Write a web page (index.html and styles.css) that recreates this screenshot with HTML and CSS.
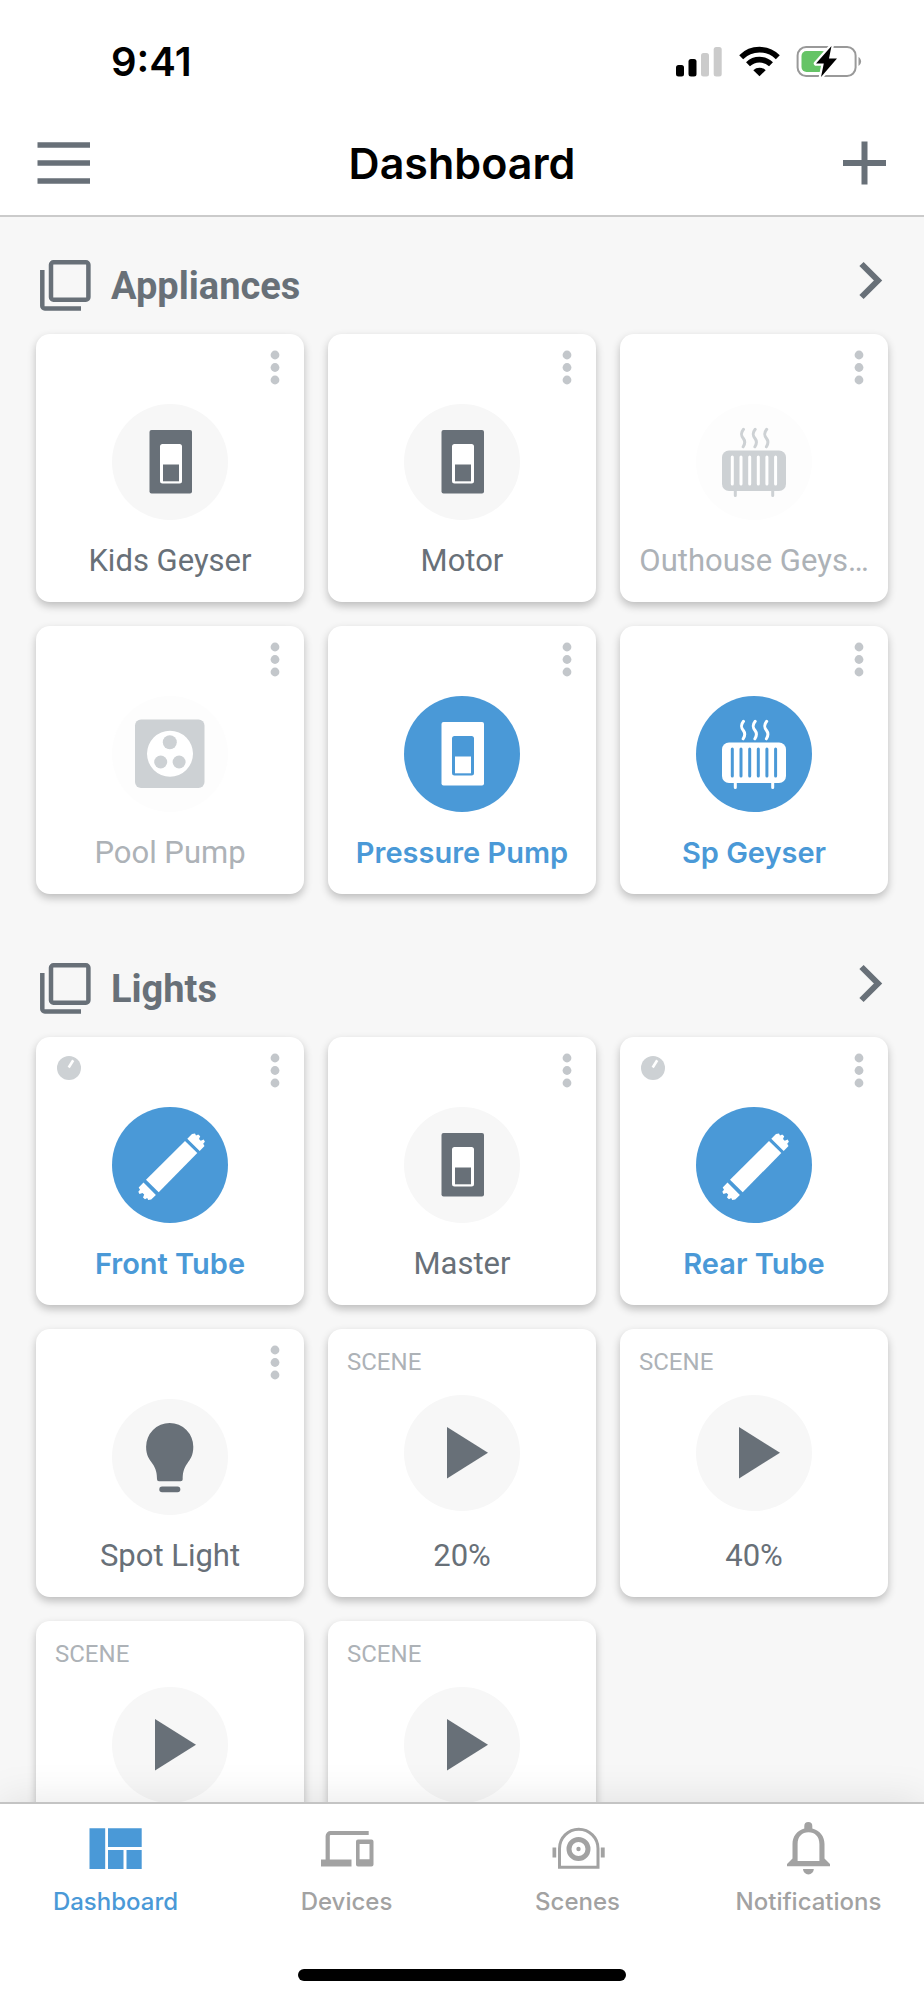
FILE: index.html
```html
<!DOCTYPE html>
<html lang="en">
<head>
<meta charset="utf-8">
<meta name="viewport" content="width=device-width, initial-scale=1">
<title>Dashboard</title>
<link rel="stylesheet" href="styles.css">
</head>
<body>
<svg class="sprite" aria-hidden="true">
  <symbol id="dots" viewBox="0 0 20 36">
    <circle cx="10" cy="5" r="4.4"/><circle cx="10" cy="17.5" r="4.4"/><circle cx="10" cy="30" r="4.4"/>
  </symbol>
  <symbol id="layers" viewBox="0 0 52 52">
    <path d="M13.5 2.3h32.4a2.5 2.5 0 0 1 2.5 2.5v32.400a2.500 2.500 0 0 1-2.500 2.500H13.500a2.500 2.500 0 0 1-2.500-2.500V4.800a2.500 2.500 0 0 1 2.500-2.500zM2.300 10v35.900a2.500 2.500 0 0 0 2.500 2.500H41" fill="none" stroke="currentColor" stroke-width="4.500"/>
  </symbol>
  <symbol id="chevron" viewBox="0 0 26 42">
    <path d="M3.500 4l16.500 16.500L3.500 37" fill="none" stroke="currentColor" stroke-width="6"/>
  </symbol>
  <symbol id="dial" viewBox="0 0 24 24">
    <circle cx="12" cy="12" r="12"/><path d="M11.700 11.500l4.500-7.200" stroke="#fff" stroke-width="2.600"/>
  </symbol>
  <symbol id="switch" viewBox="0 0 116 116">
    <rect x="37.500" y="26" width="42.500" height="63.500" rx="2"/>
    <rect class="hole" x="48" y="40" width="22" height="39.500" rx="2.500"/>
    <rect x="51" y="60.500" width="16" height="16.800"/>
  </symbol>
  <symbol id="radiator" viewBox="0 0 116 116">
    <rect x="26" y="46.500" width="64" height="40.500" rx="7"/>
    <path class="slit" d="M36.300 53v27M45 53v27M53.700 53v27M62.300 53v27M70.900 53v27M79.600 53v27" fill="none" stroke-width="3" stroke-linecap="round"/>
    <path d="M39.300 86v5.500M76.700 86v5.500M47.500 25.300c-3.600 4.500-2 7 0 9.500s1.500 5-.3 8M59.200 25.300c-3.600 4.500-2 7 0 9.500s1.500 5-.3 8M70.700 25.300c-3.600 4.500-2 7 0 9.500s1.500 5-.3 8" fill="none" stroke="currentColor" stroke-width="3" stroke-linecap="round"/>
  </symbol>
  <symbol id="socket" viewBox="0 0 116 116">
    <rect x="23" y="23.500" width="69.500" height="68.500" rx="6"/>
    <circle class="hole" cx="58" cy="57.700" r="23"/>
    <circle cx="57.800" cy="46.300" r="7"/><circle cx="48.700" cy="66" r="6.500"/><circle cx="67.100" cy="66" r="6.500"/>
  </symbol>
  <symbol id="tube" viewBox="0 0 116 116">
    <path d="M73 34l12.300 12L46.700 85.300 34 72.700z"/>
    <path id="cap" d="M75.300 31.700L80 27l3-.4 1 2 2.200-1.200 2 1.800-1.200 2.800 1.700 1.700 3-1.200 1.200 2.300-1.700 2 1.300 2.200-4.800 5z"/>
    <use href="#cap" transform="rotate(180 59.600 59.800)"/>
  </symbol>
  <symbol id="bulb" viewBox="0 0 116 116">
    <path d="M57.700 24a23.600 23.600 0 0 1 23.600 23.700c0 9-3.200 12.500-6.200 17-3.500 5-4.400 9.500-4.400 15.600q0 2-2 2H47q-2 0-2-2c0-6.100-1-10.600-4.500-15.600-3-4.500-6.400-8-6.400-17A23.600 23.600 0 0 1 57.700 24z"/>
    <rect x="47.300" y="87.600" width="21" height="5.700" rx="2.800"/>
  </symbol>
  <symbol id="play" viewBox="0 0 116 116"><path d="M43 32v51.500L84 57.800z"/></symbol>
</svg>

<header class="top">
  <div class="status">
    <time class="clock">9:41</time>
    <svg class="status-icons" viewBox="0 0 186 32" role="img" aria-label="Signal, Wi-Fi and battery">
      <rect x="0" y="19" width="8" height="11.500" rx="2.500"/><rect x="12.500" y="13" width="8" height="17.500" rx="2.500"/>
      <g fill="#cbcbcb"><rect x="25" y="7" width="8" height="23.500" rx="2.500"/><rect x="37.700" y="1" width="8" height="29.500" rx="2.500"/></g>
      <g fill="none" stroke="#000" stroke-width="5.600"><path d="M65.200 11.200a26 26 0 0 1 36.600 0"/><path d="M72 18.300a16.500 16.500 0 0 1 23 0"/></g>
      <path d="M77.300 24.200a9 9 0 0 1 12.400 0L83.500 30.300z"/>
      <rect x="121.600" y="1" width="58" height="29" rx="8.500" fill="none" stroke="#999" stroke-width="2"/>
      <path d="M182.500 11a5.200 5.200 0 0 1 0 9z" fill="#999"/>
      <rect x="125.500" y="5" width="25" height="21" rx="5" fill="#65c466"/>
      <path d="M155.500 0L140 17.500h7.800L145 31l16-18.500h-8z" fill="#000" stroke="#fff" stroke-width="4.500" paint-order="stroke" stroke-linejoin="round"/>
    </svg>
  </div>
  <div class="nav">
    <button class="icon-btn" type="button" aria-label="Menu">
      <svg width="54" height="44" viewBox="0 0 54 44"><path d="M.500 4h52.500M.500 22h52.500M.500 40h52.500" stroke="currentColor" stroke-width="5.600"/></svg>
    </button>
    <h1>Dashboard</h1>
    <button class="icon-btn" type="button" aria-label="Add">
      <svg width="44" height="44" viewBox="0 0 44 44"><path d="M0 22h43M21.500 .500v43" stroke="currentColor" stroke-width="6"/></svg>
    </button>
  </div>
</header>

<main>
  <section>
    <div class="section-head">
      <svg class="layers"><use href="#layers"/></svg>
      <h2>Appliances</h2>
      <a class="more" href="#appliances" aria-label="Open Appliances"><svg><use href="#chevron"/></svg></a>
    </div>
    <div class="grid">
      <article class="card">
        <div class="card-top"><button class="menu" type="button" aria-label="Options"><svg><use href="#dots"/></svg></button></div>
        <svg class="disc"><use href="#switch"/></svg>
        <p class="name">Kids Geyser</p>
      </article>
      <article class="card">
        <div class="card-top"><button class="menu" type="button" aria-label="Options"><svg><use href="#dots"/></svg></button></div>
        <svg class="disc"><use href="#switch"/></svg>
        <p class="name">Motor</p>
      </article>
      <article class="card offline">
        <div class="card-top"><button class="menu" type="button" aria-label="Options"><svg><use href="#dots"/></svg></button></div>
        <svg class="disc"><use href="#radiator"/></svg>
        <p class="name">Outhouse Geys…</p>
      </article>
      <article class="card offline">
        <div class="card-top"><button class="menu" type="button" aria-label="Options"><svg><use href="#dots"/></svg></button></div>
        <svg class="disc"><use href="#socket"/></svg>
        <p class="name">Pool Pump</p>
      </article>
      <article class="card on">
        <div class="card-top"><button class="menu" type="button" aria-label="Options"><svg><use href="#dots"/></svg></button></div>
        <svg class="disc"><use href="#switch"/></svg>
        <p class="name">Pressure Pump</p>
      </article>
      <article class="card on">
        <div class="card-top"><button class="menu" type="button" aria-label="Options"><svg><use href="#dots"/></svg></button></div>
        <svg class="disc"><use href="#radiator"/></svg>
        <p class="name">Sp Geyser</p>
      </article>
    </div>
  </section>

  <section>
    <div class="section-head">
      <svg class="layers"><use href="#layers"/></svg>
      <h2>Lights</h2>
      <a class="more" href="#lights" aria-label="Open Lights"><svg><use href="#chevron"/></svg></a>
    </div>
    <div class="grid">
      <article class="card on">
        <div class="card-top"><svg class="dial"><use href="#dial"/></svg><button class="menu" type="button" aria-label="Options"><svg><use href="#dots"/></svg></button></div>
        <svg class="disc"><use href="#tube"/></svg>
        <p class="name">Front Tube</p>
      </article>
      <article class="card">
        <div class="card-top"><button class="menu" type="button" aria-label="Options"><svg><use href="#dots"/></svg></button></div>
        <svg class="disc"><use href="#switch"/></svg>
        <p class="name">Master</p>
      </article>
      <article class="card on">
        <div class="card-top"><svg class="dial"><use href="#dial"/></svg><button class="menu" type="button" aria-label="Options"><svg><use href="#dots"/></svg></button></div>
        <svg class="disc"><use href="#tube"/></svg>
        <p class="name">Rear Tube</p>
      </article>
      <article class="card">
        <div class="card-top"><button class="menu" type="button" aria-label="Options"><svg><use href="#dots"/></svg></button></div>
        <svg class="disc"><use href="#bulb"/></svg>
        <p class="name">Spot Light</p>
      </article>
      <article class="card scene">
        <div class="card-top"><span class="tag">SCENE</span></div>
        <svg class="disc"><use href="#play"/></svg>
        <p class="name">20%</p>
      </article>
      <article class="card scene">
        <div class="card-top"><span class="tag">SCENE</span></div>
        <svg class="disc"><use href="#play"/></svg>
        <p class="name">40%</p>
      </article>
      <article class="card scene">
        <div class="card-top"><span class="tag">SCENE</span></div>
        <svg class="disc"><use href="#play"/></svg>
      </article>
      <article class="card scene">
        <div class="card-top"><span class="tag">SCENE</span></div>
        <svg class="disc"><use href="#play"/></svg>
      </article>
    </div>
  </section>
</main>

<footer class="bottom">
  <nav class="tabs">
    <a class="tab active" href="#dashboard" aria-current="page">
      <svg viewBox="0 0 60 60"><path d="M3.500 10.300h15.700V51H3.500zM22 10.300h33.700V29H22zM22 32h15.500v19H22zM40.500 32h15.200v19H40.500z"/></svg>
      Dashboard
    </a>
    <a class="tab" href="#devices">
      <svg viewBox="0 0 60 60"><path d="M10.700 42V18a3 3 0 0 1 3-3h38" fill="none" stroke="currentColor" stroke-width="4.200"/><path d="M4 41.500h30.500v7H4z"/><path fill-rule="evenodd" d="M41 21.500h13.500a2 2 0 0 1 2 2v23a2 2 0 0 1-2 2H41a2 2 0 0 1-2-2v-23a2 2 0 0 1 2-2zM42.600 26v15.300h9.900V26z"/></svg>
      Devices
    </a>
    <a class="tab" href="#scenes">
      <svg viewBox="0 0 60 60"><path d="M11.500 49.200V30.500a19.200 19.200 0 0 1 38.500 0v18.700z" fill="none" stroke="currentColor" stroke-width="3"/><circle cx="30.500" cy="31" r="9.500" fill="none" stroke="currentColor" stroke-width="5"/><circle cx="30.500" cy="31" r="2.200"/><path d="M4.500 29.500h3.700v10H4.500zM52.800 29.500h3.900v10h-3.900z"/></svg>
      Scenes
    </a>
    <a class="tab" href="#notifications">
      <svg viewBox="0 0 60 60"><path fill-rule="evenodd" d="M25.300 10.500V8a4 4 0 0 1 8 0v2.500C41 12.500 45.500 18.500 45.500 26v14.500l5.500 5.500v2.200H8V46l5.500-5.500V26c0-7.500 4.500-13.500 11.800-15.500zM18.600 43h21.800V26c0-7.200-4.300-11.700-10.900-11.700S18.600 18.800 18.600 26z"/><path d="M24 51h10.800a5.400 5.400 0 0 1-10.800 0z"/></svg>
      Notifications
    </a>
  </nav>
  <div class="home-bar"></div>
</footer>
</body>
</html>
```

FILE: styles.css
```css
:root {
  --ink: #687078;
  --blue: #4a99d7;
  --page: #f7f7f7;
}

* {
  box-sizing: border-box;
}

body {
  margin: 0;
  height: 100vh;
  display: flex;
  flex-direction: column;
  background: #fff;
  color: var(--ink);
  font-family: Roboto, "Open Sans", sans-serif;
}

h1,
h2,
p {
  margin: 0;
}

svg {
  display: block;
  fill: currentColor;
  flex: none;
}

button {
  padding: 0;
  border: 0;
  background: none;
  color: inherit;
}

.sprite {
  position: absolute;
  width: 0;
  height: 0;
}

/* Status bar and title */
.top {
  border-bottom: 2px solid #cbcbcb;
}

.status {
  display: flex;
  align-items: center;
  justify-content: space-between;
  padding: 37px 62px 0 111px;
}

.clock {
  color: #000;
  font: 600 40px/50px Inter, sans-serif;
}

.status-icons {
  width: 186px;
  height: 32px;
  color: #000;
}

.nav {
  display: grid;
  grid-template-columns: 1fr auto 1fr;
  align-items: center;
  padding: 48px 37px 24px;
}

.icon-btn:last-child {
  justify-self: end;
}

h1 {
  color: #000;
  font: 600 43px/56px Inter, sans-serif;
}

/* Scrolling content */
main {
  flex: 1;
  min-height: 0;
  overflow: hidden;
  padding: 43px 36px 0;
  background: var(--page);
}

section + section {
  margin-top: 69px;
}

.section-head {
  display: flex;
  align-items: center;
  gap: 19px;
  padding: 0 4px;
  margin-bottom: 22px;
}

.layers {
  width: 52px;
  height: 52px;
}

h2 {
  flex: 1;
  font-size: 38px;
  line-height: 48px;
  font-weight: 700;
}

.more {
  align-self: flex-start;
  color: inherit;
}

.more svg {
  width: 26px;
  height: 42px;
}

.grid {
  display: grid;
  grid-template-columns: repeat(3, minmax(0, 1fr));
  gap: 24px;
}

.card {
  aspect-ratio: 1;
  display: flex;
  flex-direction: column;
  align-items: center;
  padding-bottom: 23px;
  border-radius: 14px;
  background: #fff;
  box-shadow: 0 4px 8px rgba(0, 0, 0, 0.24);
}

.card-top {
  align-self: stretch;
  display: flex;
  align-items: flex-start;
  height: 70px;
  padding: 16px 19px 0;
}

.menu {
  margin-left: auto;
  color: #c3c7cb;
}

.menu svg {
  width: 20px;
  height: 36px;
}

.dial {
  width: 24px;
  height: 24px;
  margin: 3px 2px;
  color: #cdd1d4;
}

.disc {
  --hole: #fff;
  width: 116px;
  height: 116px;
  border-radius: 50%;
  background: #f7f7f7;
}

.hole {
  fill: var(--hole);
}

.slit {
  stroke: var(--hole);
}

.name {
  max-width: 100%;
  margin-top: auto;
  padding: 0 16px;
  overflow: hidden;
  font-size: 31px;
  line-height: 36px;
  text-overflow: ellipsis;
  white-space: nowrap;
}

.offline .disc {
  background: #fdfdfd;
  color: #cdd1d4;
}

.offline .name {
  color: #adb2b7;
}

.on .disc {
  --hole: var(--blue);
  background: var(--blue);
  color: #fff;
}

.on .name {
  color: var(--blue);
  font-family: Inter, sans-serif;
  font-size: 29px;
  font-weight: 600;
}

.scene .card-top {
  height: 66px;
  padding-top: 19px;
}

.tag {
  color: #adb2b7;
  font-size: 24px;
  line-height: 28px;
}

/* Tab bar */
.bottom {
  position: relative;
  padding-bottom: 19px;
  border-top: 2px solid #c4c4c4;
  background: #fff;
  box-shadow: 0 0 40px rgba(0, 0, 0, 0.1);
}

.tabs {
  display: grid;
  grid-template-columns: repeat(4, 1fr);
}

.tab {
  display: flex;
  flex-direction: column;
  align-items: center;
  gap: 9px;
  padding-top: 14px;
  color: #a2a2a2;
  font: 500 24px/30px Inter, sans-serif;
  text-decoration: none;
}

.tab svg {
  width: 60px;
  height: 60px;
}

.tab.active {
  color: var(--blue);
}

.home-bar {
  width: 328px;
  height: 12px;
  margin: 52px auto 0;
  border-radius: 6px;
  background: #000;
}
```
